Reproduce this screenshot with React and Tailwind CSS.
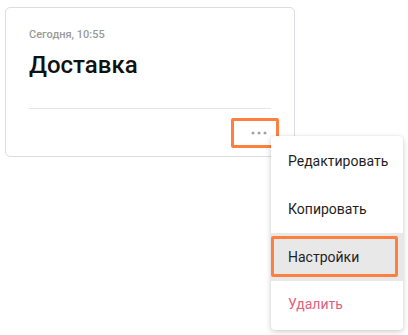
import React from "react";

export default function App() {
  const font = { fontFamily: "Roboto, 'Noto Sans', sans-serif" };
  return (
    <div className="relative w-[408px] h-[335px] bg-white overflow-hidden" style={font}>
      <div className="ml-[5px] mt-[7px] w-[290px] h-[150px] border border-[#dedbe8] rounded-[5px] bg-white flex flex-col">
        <div className="px-[23px] pt-[20px]">
          <div className="text-[11px] leading-[13px] font-medium text-[#9a9a9a]">Сегодня, 10:55</div>
          <div className="mt-[10px] text-[24px] leading-[28px] font-medium text-[#111]">Доставка</div>
          <div className="mt-[29px] h-px bg-[#e6e5ec]"></div>
        </div>
        <div className="flex justify-end pr-[15px] mt-[9px]">
          <div className="w-[48px] h-[30px] border-[3px] border-[#ff7f3f] rounded-[2px] flex items-center justify-end pr-[10px] gap-[4px]">
            <span className="w-[2px] h-[2px] rounded-full bg-[#9a98ac] shadow-[0_0_0_0.6px_#b5b3c4]"></span>
            <span className="w-[2px] h-[2px] rounded-full bg-[#9a98ac] shadow-[0_0_0_0.6px_#b5b3c4]"></span>
            <span className="w-[2px] h-[2px] rounded-full bg-[#9a98ac] shadow-[0_0_0_0.6px_#b5b3c4]"></span>
          </div>
        </div>
      </div>

      <div className="absolute left-[271px] top-[136px] w-[132px] bg-white rounded-[4px] shadow-[0_2px_6px_rgba(0,0,0,0.18),0_0_2px_rgba(0,0,0,0.08)] pt-[2px] pb-[2px] text-[14px] text-[#1f1f1f]">
        <div className="h-[47px] flex items-center pl-[17px]">Редактировать</div>
        <div className="h-[48px] flex items-center pl-[17px]">Копировать</div>
        <div className="relative h-[48px] flex items-center pl-[17px] bg-[#e8e8e8]">
          Настройки
          <span className="absolute left-0 right-[5px] top-[3px] bottom-[4px] border-[3px] border-[#ff7f3f] rounded-[2px]"></span>
        </div>
        <div className="h-[47px] flex items-center pl-[17px] text-[#e0607e]">Удалить</div>
      </div>
    </div>
  );
}
